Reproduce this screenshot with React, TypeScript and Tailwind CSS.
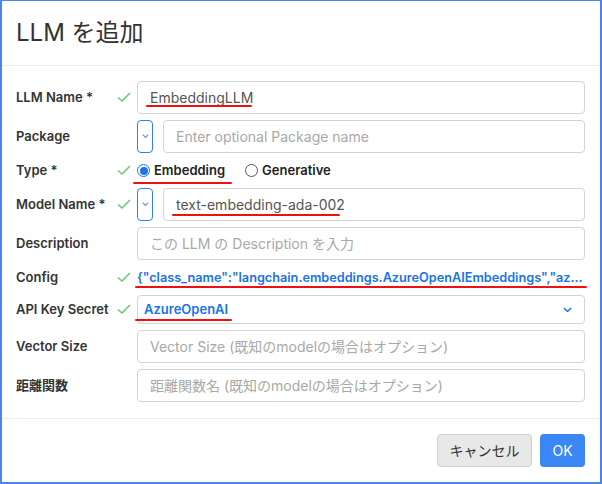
import React from "react";

const Check = () => (
  <svg width="14" height="11" viewBox="0 0 14 11" className="block">
    <polyline points="1,5.5 5,9 13,1" fill="none" stroke="#6cc878" strokeWidth="1.6" />
  </svg>
);

const Chevron = ({ color = "#6b8fd8", w = 8 }: { color?: string; w?: number }) => (
  <svg width={w} height={w * 0.6} viewBox="0 0 10 6" className="block">
    <polyline points="1,1 5,5 9,1" fill="none" stroke={color} strokeWidth="1.6" />
  </svg>
);

function Row({
  label,
  check,
  h,
  children,
}: {
  label: string;
  check?: boolean;
  h: string;
  children: React.ReactNode;
}) {
  return (
    <div className={`flex items-center ${h}`}>
      <div className="w-[101px] text-[13px] font-semibold text-[#333]">{label}</div>
      <div className="w-[20px] flex items-center">{check ? <Check /> : null}</div>
      <div className="flex-1 flex items-center h-full min-w-0">{children}</div>
    </div>
  );
}

const Input = ({ value, placeholder }: { value?: string; placeholder?: string }) => (
  <div className="flex-1 h-full border border-[#d4d4d4] rounded-[4px] flex items-center px-[12px] text-[14px] min-w-0">
    {value ? (
      <span className="text-[#555]">{value}</span>
    ) : (
      <span className="text-[#a8a8a8] whitespace-nowrap">{placeholder}</span>
    )}
  </div>
);

const Toggle = () => (
  <div className="w-[16px] h-full border border-[#2f7cf6] rounded-[4px] flex items-center justify-center mr-[10px] shrink-0">
    <Chevron w={7} />
  </div>
);

export default function App() {
  return (
    <div className="relative w-[602px] h-[484px] bg-white border-2 border-t border-[#4a86e8] font-['Inter','Noto_Sans_CJK_JP',sans-serif] overflow-hidden">
      <div className="h-[65px] border-b border-[#ececec] flex items-center px-[14px]">
        <div className="text-[24px] text-[#333] font-normal">LLM を追加</div>
      </div>
      <div className="pt-[15px] pb-[16px] pl-[14px] pr-[15px] flex flex-col gap-[6px] border-b border-[#ececec]">
        <Row label="LLM Name *" check h="h-[33px]">
          <Input value="EmbeddingLLM" />
        </Row>
        <Row label="Package" h="h-[33px]">
          <Toggle />
          <Input placeholder="Enter optional Package name" />
        </Row>
        <Row label="Type *" check h="h-[23px]">
          <div className="flex items-center text-[13px] font-semibold text-[#222]">
            <span className="w-[13px] h-[13px] rounded-full border border-[#1a73e8] flex items-center justify-center mr-[4px]">
              <span className="w-[8px] h-[8px] rounded-full bg-[#1a73e8]" />
            </span>
            <span>Embedding</span>
            <span className="w-[13px] h-[13px] rounded-full border border-[#555] ml-[20px] mr-[4px]" />
            <span>Generative</span>
          </div>
        </Row>
        <Row label="Model Name *" check h="h-[33px]">
          <Toggle />
          <Input value="text-embedding-ada-002" />
        </Row>
        <Row label="Description" h="h-[33px]">
          <Input placeholder="この LLM の Description を入力" />
        </Row>
        <Row label="Config" check h="h-[23px]">
          <div className="whitespace-nowrap text-[12.7px] font-semibold text-[#1a73e8]">
            {'{"class_name":"langchain.embeddings.AzureOpenAIEmbeddings","az...'}
          </div>
        </Row>
        <Row label="API Key Secret" check h="h-[29px]">
          <div className="flex-1 h-full border border-[#d4d4d4] rounded-[4px] flex items-center justify-between pl-[6px] pr-[12px]">
            <span className="text-[13px] font-semibold text-[#1a73e8]">AzureOpenAI</span>
            <Chevron color="#1a73e8" w={9} />
          </div>
        </Row>
        <Row label="Vector Size" h="h-[33px]">
          <Input placeholder="Vector Size (既知のmodelの場合はオプション)" />
        </Row>
        <Row label="距離関数" h="h-[33px]">
          <Input placeholder="距離関数名 (既知のmodelの場合はオプション)" />
        </Row>
      </div>
      <div className="flex justify-end gap-[8px] pt-[15px] pr-[15px]">
        <button className="h-[33px] w-[95px] rounded-[4px] bg-[#e8e8e8] border border-[#cfcfcf] text-[14px] text-[#333]">
          キャンセル
        </button>
        <button className="h-[33px] w-[45px] rounded-[4px] bg-[#3b86f5] text-[14px] text-white">OK</button>
      </div>

      {/* red annotation underlines */}
      <div className="absolute left-[144px] top-[104px] w-[106px] h-[2px] rounded-full bg-[#ee1111]" />
      <div className="absolute left-[131px] top-[181px] w-[99px] h-[2px] rounded-full bg-[#ee1111]" />
      <div className="absolute left-[170px] top-[213px] w-[168px] h-[2px] rounded-full bg-[#ee1111]" />
      <div className="absolute left-[133px] top-[285px] w-[452px] h-[2px] rounded-full bg-[#ee1111]" />
      <div className="absolute left-[133px] top-[318px] w-[97px] h-[2px] rounded-full bg-[#ee1111]" />
    </div>
  );
}
